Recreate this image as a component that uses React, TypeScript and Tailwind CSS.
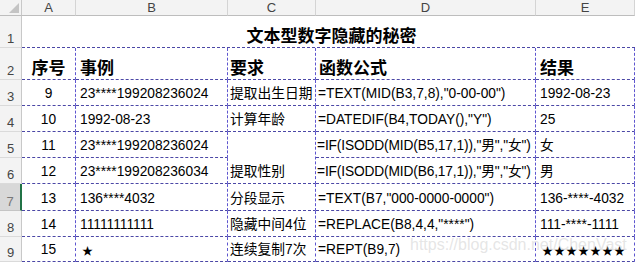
import React from "react";

const font = "font-['Liberation_Sans','Noto_Sans_CJK_SC',sans-serif]";
const cjk = "font-['Noto_Sans_CJK_SC',sans-serif]";

const rowHeader =
  "flex items-end justify-center pb-[1px] text-[13px] leading-[15px] text-[#444] bg-[#f3f3f3] border-r border-b border-r-[#c8c8c8] border-b-[#dadada]";
const colHeader =
  "flex items-center justify-center text-[13px] leading-[15px] text-[#444] bg-[#f3f3f3] border-r border-b border-r-[#d4d4d4] border-b-[#bdbdbd]";
const cell =
  "flex items-end pb-[3px] text-[13.75px] leading-[16px] text-black border-r border-b border-dashed border-r-[#5e56cf] border-b-[#4b47a6] whitespace-nowrap overflow-hidden";
const headCell =
  "flex items-end pb-[2px] text-[17px] leading-[20px] font-bold text-black border-r border-b border-dashed border-r-[#5e56cf] border-b-[#4b47a6] whitespace-nowrap";

type Row = { n: number; a: string; b: string; c?: string; d: string; e: React.ReactNode };

const rows: Row[] = [
  { n: 3, a: "9", b: "23****199208236024", c: "提取出生日期", d: '=TEXT(MID(B3,7,8),"0-00-00")', e: "1992-08-23" },
  { n: 4, a: "10", b: "1992-08-23", c: "计算年龄", d: '=DATEDIF(B4,TODAY(),"Y")', e: "25" },
  { n: 5, a: "11", b: "23****199208236024", c: "提取性别", d: '=IF(ISODD(MID(B5,17,1)),"男","女")', e: "女" },
  { n: 6, a: "12", b: "23****199208236034", d: '=IF(ISODD(MID(B6,17,1)),"男","女")', e: "男" },
  { n: 7, a: "13", b: "136****4032", c: "分段显示", d: '=TEXT(B7,"000-0000-0000")', e: "136-****-4032" },
  { n: 8, a: "14", b: "11111111111", c: "隐藏中间4位", d: '=REPLACE(B8,4,4,"****")', e: "111-****-1111" },
  { n: 9, a: "15", b: "★", c: "连续复制7次", d: "=REPT(B9,7)", e: "★★★★★★★" },
];

export default function App() {
  return (
    <div className={`relative w-[635px] h-[262px] overflow-hidden bg-white ${font}`}>
      <div className="grid grid-cols-[22px_54px_152px_88px_220px_99px] grid-rows-[16px_32px_32px_26px_26px_26px_26px_27px_26px_25px]">
        {/* column header row */}
        <div className="relative bg-[#f3f3f3] border-r border-b border-r-[#c8c8c8] border-b-[#bdbdbd]">
          <svg className="absolute right-[2px] bottom-[2px]" width="10" height="10" viewBox="0 0 10 10">
            <polygon points="10,0 10,10 0,10" fill="#c4c4c4" />
          </svg>
        </div>
        <div className={colHeader}>A</div>
        <div className={colHeader}>B</div>
        <div className={colHeader}>C</div>
        <div className={colHeader}>D</div>
        <div className={colHeader}>E</div>

        {/* row 1 */}
        <div className={rowHeader}>1</div>
        <div className="col-span-5 flex items-end justify-center pb-[2px] border-b border-dashed border-b-[#4b47a6]">
          <span className={`text-[17px] leading-[20px] font-bold text-black ${cjk} pl-[6px]`}>文本型数字隐藏的秘密</span>
        </div>

        {/* row 2 */}
        <div className={rowHeader}>2</div>
        <div className={`${headCell} justify-center ${cjk}`}>序号</div>
        <div className={`${headCell} pl-[4px] ${cjk}`}>事例</div>
        <div className={`${headCell} pl-[2px] ${cjk}`}>要求</div>
        <div className={`${headCell} pl-[3px] ${cjk}`}>函数公式</div>
        <div className={`${headCell} pl-[4px] ${cjk}`}>结果</div>

        {rows.map((r) => (
          <React.Fragment key={r.n}>
            <div
              className={
                r.n === 7
                  ? "flex items-end justify-center pb-[1px] text-[13px] leading-[15px] text-[#777] bg-[#d8d8d8] border-b border-b-[#c4c4c4] border-r-2 border-r-[#217346]"
                  : rowHeader
              }
            >
              {r.n}
            </div>
            <div className={`${cell} justify-center`}>{r.a}</div>
            <div className={`${cell} pl-[4px]`}>
              {r.n === 9 ? (
                <span className={`${cjk} text-[11px] pl-[2px]`}>{r.b}</span>
              ) : (
                r.b
              )}
            </div>
            {r.n === 5 ? (
              <div className={`${cell} row-span-2 items-center pb-0 pl-[2px]`}>{r.c}</div>
            ) : r.n === 6 ? null : (
              <div className={`${cell} pl-[2px]`}>{r.c}</div>
            )}
            <div className={`${cell} ${r.n === 5 || r.n === 6 ? "pl-[1px] tracking-[-0.15px]" : "pl-[2px]"}`}>{r.d}</div>
            <div className={`${cell} ${r.n === 9 ? "pl-[6px]" : "pl-[4px]"}`}>
              {r.n === 9 ? <span className={`${cjk} text-[11px] tracking-[1px]`}>{r.e}</span> : r.e}
            </div>
          </React.Fragment>
        ))}
      </div>

      <div className="absolute left-[410px] top-[237px] text-[16px] leading-none text-[rgba(190,190,190,0.4)] whitespace-nowrap pointer-events-none">
        https://blog.csdn.net/ChenVast
      </div>
    </div>
  );
}
